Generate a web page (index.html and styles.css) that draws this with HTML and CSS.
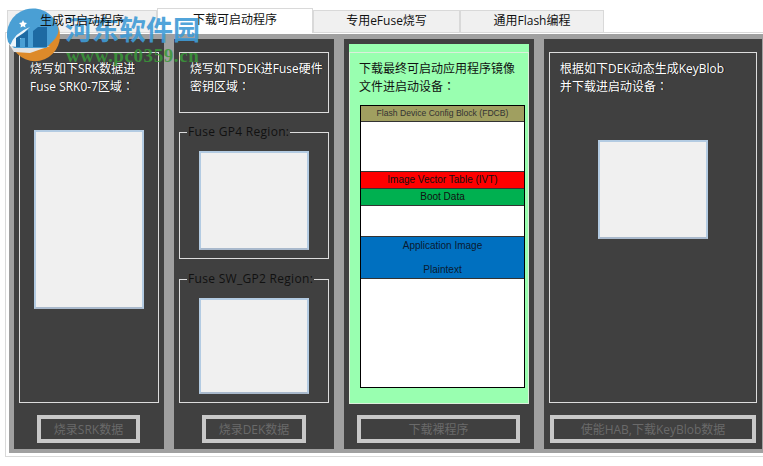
FILE: index.html
```html
<!DOCTYPE html>
<html lang="en">
<head>
    <meta charset="UTF-8">
    <title>下载可启动程序</title>
    <link rel="stylesheet" href="styles.css">
</head>
<body>
    <div class="tabs">
        <div class="tab tab-1"><span class="tab-label">生成可启动程序</span></div>
        <div class="tab tab-active">下载可启动程序</div>
        <div class="tab tab-3">专用eFuse烧写</div>
        <div class="tab tab-4">通用Flash编程</div>
    </div>

    <div class="pane">
        <div class="columns">

            <div class="panel panel-srk">
                <div class="box box-srk">
                    <p class="note">烧写如下SRK数据进<br>Fuse SRK0-7区域<span class="colon">：</span></p>
                    <div class="pic pic-srk"></div>
                </div>
                <button class="btn btn-srk">烧录SRK数据</button>
            </div>

            <div class="panel panel-dek">
                <div class="box box-dek">
                    <p class="note">烧写如下DEK进Fuse硬件<br>密钥区域<span class="colon">：</span></p>
                </div>
                <fieldset class="region region-gp4">
                    <legend>Fuse GP4 Region:</legend>
                    <div class="pic pic-gp4"></div>
                </fieldset>
                <fieldset class="region region-gp2">
                    <legend>Fuse SW_GP2 Region:</legend>
                    <div class="pic pic-gp2"></div>
                </fieldset>
                <button class="btn btn-dek">烧录DEK数据</button>
            </div>

            <div class="panel panel-app">
                <div class="green">
                    <div class="box box-app">
                        <p class="note note-dark">下载最终可启动应用程序镜像<br>文件进启动设备<span class="colon">：</span></p>
                        <div class="diagram">
                            <div class="seg seg-fdcb">Flash Device Config Block (FDCB)</div>
                            <div class="seg seg-gap1"></div>
                            <div class="seg seg-ivt">Image Vector Table (IVT)</div>
                            <div class="seg seg-boot">Boot Data</div>
                            <div class="seg seg-gap2"></div>
                            <div class="seg seg-image"><span>Application Image</span><span>Plaintext</span></div>
                            <div class="seg seg-rest"></div>
                        </div>
                    </div>
                </div>
                <button class="btn btn-app">下载裸程序</button>
            </div>

            <div class="panel panel-key">
                <div class="box box-key">
                    <p class="note">根据如下DEK动态生成KeyBlob<br>并下载进启动设备<span class="colon">：</span></p>
                    <div class="pic pic-key"></div>
                </div>
                <button class="btn btn-key">使能HAB,下载KeyBlob数据</button>
            </div>

        </div>
    </div>

    <!-- site watermark over the top left corner -->
    <div class="watermark">
        <svg class="wm-logo" width="70" height="70" viewBox="0 0 70 70">
            <circle cx="35" cy="36" r="25" fill="#dd8a2a" transform="translate(0 -1) scale(1 1.02)"/>
            <path d="M9 44 L50 46 L30 53 L14 52 Z" fill="#e4e4e4"/>
            <path d="M8 42 A26 26 0 0 1 58 27 Q60 34 53 41 L46 48 L14 48 Z" fill="#4a9fd4"/>
            <path d="M10 46 Q14 33 30 27 Q20 35 17 47 Z" fill="#fff" opacity="0.9"/>
            <path d="M16 47 L16 38 L28 30 L28 47 L25 47 L25 38 L20 38 L20 47 Z" fill="#1d6aa3"/>
            <path d="M33 47 L33 31 L38 27 L47 27 L47 47 Z" fill="#1d6aa3"/>
            <path d="M23 20 L24.2 22.6 L27 23 L25 25 L25.5 27.6 L23 26.3 L20.5 27.6 L21 25 L19 23 L21.8 22.6 Z" fill="#fff"/>
        </svg>
        <div class="wm-name">河东软件园</div>
        <div class="wm-url">www.pc0359.cn</div>
    </div>
</body>
</html>
```

FILE: styles.css
```css
*{
    margin: 0;
    padding: 0;
    box-sizing: border-box;
}
html,body{
    width: 763px;
    height: 466px;
    overflow: hidden;
    background-color: #fff;
}
body{
    position: relative;
    padding-top: 8px;
    font-family: "Open Sans", "Noto Sans CJK SC", sans-serif;
    font-size: 12px;
    color: #111;
}

/* tabs */
.tabs{
    display: flex;
    align-items: flex-end;
    height: 24px;
    padding-left: 7px;
}
.tab{
    height: 22px;
    line-height: 20px;
    text-align: center;
    background-color: #f0f0f0;
    border: 1px solid #d9d9d9;
    border-bottom: 0;
}
.tab-1{ width: 150px; }
.tab-label{
    position: relative;
    z-index: 2;
}
.tab-active{
    width: 156px;
    height: 25px;
    line-height: 22px;
    margin-bottom: -1px;
    background-color: #fff;
    position: relative;
}
.tab-3{ width: 147px; }
.tab-4{ width: 144px; }

/* main area */
.pane{
    height: 425px;
    margin-left: 5px;
    padding: 1px 0 2px 3px;
    border-top: 1px solid #d9d9d9;
    border-left: 1px solid #d9d9d9;
    border-bottom: 1px solid #d9d9d9;
}
.columns{
    display: flex;
    gap: 10px;
    height: 419px;
    padding: 5px 1px 4px 5px;
    background-color: #a0a0a0;
}
.panel{
    display: flex;
    flex-direction: column;
    align-items: flex-start;
    padding: 13px 5px 0;
    background-color: #404040;
}
.panel-srk{ width: 150px; }
.panel-dek{ width: 160px; }
.panel-app{ width: 190px; padding-top: 5px; }
.panel-key{ width: 218px; }

.box{
    width: 100%;
    border: 1px solid #dcdcdc;
}
.box-srk,.box-key{ height: 351px; }
.box-dek{ height: 61px; }
.note{
    padding-top: 7px;
    padding-left: 10px;
    line-height: 17px;
    color: #fff;
    text-shadow: 1px 0 #111;
}
.note-dark{
    padding-left: 9px;
    color: #111;
    text-shadow: none;
}
.colon{
    font-family: "Noto Sans CJK TC", sans-serif;
}

.pic{
    width: 110px;
    background-color: #f0f0f0;
    border: 2px solid #b3cbe2;
    border-bottom-color: #a9b9cc;
}
.pic-srk{ height: 179px; margin: 35px 0 0 14px; }
.pic-gp4{ height: 99px; margin: 12px 0 0 19px; }
.pic-gp2{ height: 96px; margin: 12px 0 0 19px; }
.pic-key{ height: 99px; margin: 45px 0 0 48px; }

fieldset.region{
    width: 100%;
    border: 1px solid #dcdcdc;
    padding-left: 0;
}
fieldset.region legend{
    margin-left: 7px;
    padding: 0 1px;
    line-height: 14px;
    letter-spacing: 0.3px;
    color: #111;
}
.region-gp4{ height: 134px; margin-top: 12px; }
.region-gp2{ height: 131px; margin-top: 13px; }

/* green middle panel */
.green{
    width: 180px;
    height: 360px;
    padding-top: 8px;
    background-color: #99ffb0;
}
.box-app{
    height: 352px;
    border-color: #dcefdc;
}
.diagram{
    display: flex;
    flex-direction: column;
    width: 165px;
    height: 283px;
    margin: 10px 0 0 10px;
    border: 1px solid #000;
    background-color: #fff;
    font-family: "Liberation Sans", sans-serif;
    font-size: 10px;
    color: #111;
    text-align: center;
}
.seg{
    flex: none;
    border-bottom: 1px solid #333;
}
.seg-fdcb{
    height: 16px;
    line-height: 14px;
    font-size: 8.6px;
    background-color: #a09f60;
    color: #333;
}
.seg-gap1{ height: 50px; }
.seg-ivt{ height: 17px; line-height: 16px; background-color: #ff0000; }
.seg-boot{ height: 17px; line-height: 16px; background-color: #00b050; }
.seg-gap2{ height: 31px; }
.seg-image{
    display: flex;
    flex-direction: column;
    justify-content: space-between;
    height: 42px;
    padding: 3px 0 3px;
    background-color: #0070c0;
    color: #0a1a30;
}
.seg-rest{ flex: 1; border-bottom: 0; }

/* bottom buttons, all disabled */
.btn{
    height: 28px;
    margin-top: 12px;
    background-color: transparent;
    border: 4px solid #c8c8c8;
    font: inherit;
    color: #6a6a6a;
}
.btn-srk{ width: 103px; margin-left: 18px; }
.btn-dek{ width: 104px; margin-left: 23px; }
.btn-app{ width: 163px; margin-left: 8px; margin-top: 11px; }
.btn-key{ width: 206px; margin-left: 1px; }

/* watermark */
.watermark{
    position: absolute;
    left: 0;
    top: 0;
    width: 210px;
    height: 70px;
    pointer-events: none;
}
.wm-logo{
    position: absolute;
    left: 0;
    top: 0;
}
.wm-name{
    position: absolute;
    left: 65px;
    top: 12px;
    font-family: "Noto Sans CJK SC", sans-serif;
    font-size: 27px;
    font-weight: 700;
    line-height: 34px;
    color: #3f9bd6;
    opacity: 0.9;
}
.wm-url{
    position: absolute;
    left: 66px;
    top: 46px;
    font-family: "Liberation Serif", serif;
    font-size: 19px;
    font-weight: 700;
    line-height: 20px;
    letter-spacing: 0.6px;
    color: #3a9a3a;
    opacity: 0.85;
}
```
